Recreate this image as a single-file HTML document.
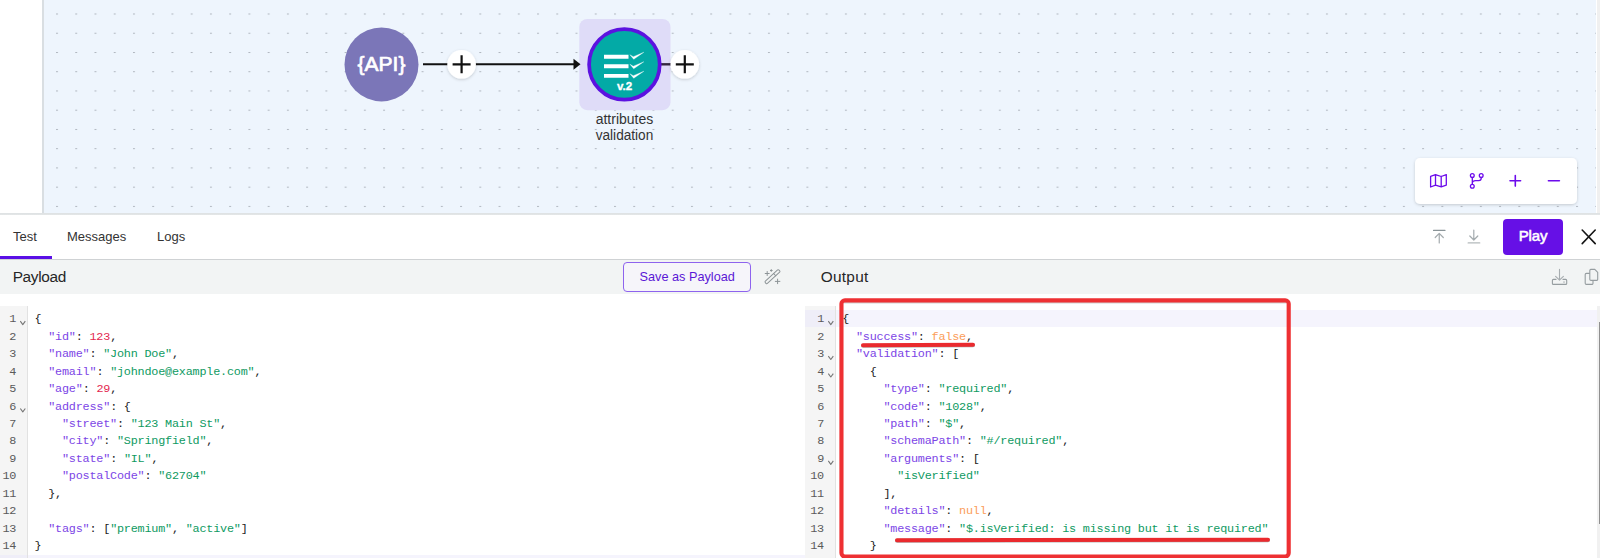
<!DOCTYPE html>
<html lang="en">
<head>
<meta charset="utf-8">
<title>Flow test</title>
<style>
*{box-sizing:border-box;margin:0;padding:0}
html,body{width:1600px;height:558px;overflow:hidden;background:#fff;font-family:"Liberation Sans",sans-serif;color:#222}
.abs{position:absolute}
#canvas{left:42px;top:0;width:1554px;height:213px;background:#eef5fd;border-left:2px solid #d9dee2;overflow:hidden}
#divider{left:0;top:213px;width:1600px;height:2px;background:linear-gradient(#dde1e3,#e4e7e8);z-index:5}
#dots{left:0;top:0}
#tabs{left:0;top:214px;width:1600px;height:46px;background:#fff;border-bottom:1px solid #cfd2d4}
.tab{top:15px;font-size:13px;color:#333;line-height:16px}
#tabline{left:0;top:42px;width:52px;height:3px;background:#5a0fe6}
#play{left:1503px;top:4.600px;width:60px;height:36.400px;border-radius:4px;background:#6610e6;color:#fff;font-size:15px;-webkit-text-stroke:0.55px #fff;text-align:center;line-height:34.600px;letter-spacing:-0.2px}
#hdr{left:0;top:260px;width:1600px;height:34px;background:#f2f4f4}
.htitle{top:7.700px;font-size:15.4px;color:#262626;line-height:18px}
#savebtn{left:623.200px;top:2.200px;width:128px;height:29.500px;border:1px solid #8e63ee;border-radius:4px;background:#f6f5fa;color:#5b17d6;font-size:12.7px;text-align:center;line-height:29px}
.gutter{top:306px;height:252px;background:#f5f5f5;border-right:1px solid #e2e2e2}
.code{font-family:"Liberation Mono",monospace;font-size:11.8px;letter-spacing:-0.206px;line-height:17.46px;white-space:pre;color:#222}
.ln{color:#5a5a5a;text-align:right}
.k{color:#7c45e6}.s{color:#0e9a62}.n{color:#e3284f}.b{color:#fb9d5a}.p{color:#222}
.fold{font-family:"Liberation Sans",sans-serif;font-size:9px;color:#777}
.active{background:#f5f4fd;height:17.5px}
</style>
</head>
<body>
<div id="canvas" class="abs">
<svg id="dots" class="abs" width="1560" height="214">
<defs><pattern id="dp" x="12" y="13.5" width="19.241" height="19.241" patternUnits="userSpaceOnUse"><rect x="0" y="0" width="2" height="1" fill="#b0b6bf"/></pattern></defs>
<rect width="1560" height="214" fill="url(#dp)"/>
</svg>
</div>
<div id="divider" class="abs"></div>
<div class="abs" style="left:1597px;top:0;width:3px;height:213px;background:#f0f0f0"></div>
<!-- flow nodes -->
<svg class="abs" style="left:0;top:0" width="1600" height="214">
<defs><filter id="sh" x="-30%" y="-30%" width="160%" height="160%"><feDropShadow dx="0" dy="1" stdDeviation="1.5" flood-color="#000" flood-opacity="0.18"/></filter></defs>
<rect x="579.300" y="19" width="91.200" height="91.200" rx="8" fill="#dfdcf8"/>
<circle cx="381.500" cy="64.400" r="37" fill="#7b76b8"/>
<text x="381.500" y="71.300" font-family="Liberation Sans, sans-serif" font-size="21" fill="#fff" stroke="#fff" stroke-width="0.7" text-anchor="middle">{API}</text>
<line x1="423" y1="64.300" x2="574" y2="64.300" stroke="#111" stroke-width="1.900"/>
<polygon points="573.500,58.800 580.500,64.300 573.500,69.800" fill="#111"/>
<line x1="660" y1="64.300" x2="674" y2="64.300" stroke="#33263f" stroke-width="2.400"/>
<circle cx="461.600" cy="64.300" r="14.300" fill="#fff" filter="url(#sh)"/>
<path d="M452.600 64.300H470.600M461.600 55.300V73.300" stroke="#111" stroke-width="2.200" fill="none"/>
<circle cx="684.800" cy="64.300" r="14.300" fill="#fff" filter="url(#sh)"/>
<path d="M675.800 64.300H693.800M684.800 55.300V73.300" stroke="#111" stroke-width="2.200" fill="none"/>
<circle cx="624.400" cy="64.400" r="35.300" fill="#03aaa6" stroke="#5c12e0" stroke-width="3.700"/>
<g stroke="#fff" stroke-width="3.900" fill="none">
<path d="M604 56.800H628.500M604 66.300H628.500M604 75.900H628.500"/>
</g>
<g fill="#fff" stroke="#fff" stroke-width="0.3" stroke-linejoin="round">
<path d="M629.900 54.7L633.300 56.7L643.900 52.2L633.700 59.3Z"/>
<path d="M629.900 64.2L633.300 66.2L643.900 61.7L633.700 68.8Z"/>
<path d="M629.900 73.7L633.300 75.7L643.900 71.2L633.700 78.3Z"/>
</g>
<text x="624.500" y="90" font-family="Liberation Sans, sans-serif" font-size="10.500" font-weight="bold" fill="#fff" stroke="#fff" stroke-width="0.3" text-anchor="middle" textLength="15.200" lengthAdjust="spacingAndGlyphs">v.2</text>
<text x="624.500" y="123.500" font-family="Liberation Sans, sans-serif" font-size="14" fill="#333" text-anchor="middle" textLength="57.600" lengthAdjust="spacingAndGlyphs">attributes</text>
<text x="624.500" y="139.500" font-family="Liberation Sans, sans-serif" font-size="14" fill="#333" text-anchor="middle" textLength="57.600" lengthAdjust="spacingAndGlyphs">validation</text>
<!-- toolbar -->
<rect x="1415" y="158" width="162" height="46" rx="5" fill="#fff" filter="url(#sh)"/>
<g stroke="#6c0beb" stroke-width="1.300" fill="none" stroke-linejoin="round" stroke-linecap="round">
<path d="M1430.600 176.300L1435.500 174.600L1441.200 176.500L1446.300 174.600V185.100L1441.200 186.900L1435.500 185.100L1430.600 187zM1435.500 174.600V185.100M1441.200 176.500V186.900"/>
<circle cx="1472.300" cy="175.600" r="1.900"/><circle cx="1481.200" cy="175.600" r="1.900"/><circle cx="1472.300" cy="186.200" r="1.900"/>
<path d="M1472.300 177.500V184.300M1481.200 177.500v0.800c0 1.400-1 2.300-2.400 2.300h-3.200c-1.800 0-3.300 1.200-3.300 3"/>
</g>
<g stroke="#6c0beb" stroke-width="1.600" fill="none" stroke-linecap="round">
<path d="M1510 180.800h10.600M1515.300 175.500v10.600"/>
<path d="M1548.400 180.800h11"/>
</g>
</svg>

<div id="tabs" class="abs">
<div class="tab abs" style="left:13px">Test</div>
<div class="tab abs" style="left:67px">Messages</div>
<div class="tab abs" style="left:157px">Logs</div>
<div id="tabline" class="abs"></div>

<div id="play" class="abs">Play</div>

</div>

<div id="hdr" class="abs">
<div class="htitle abs" style="left:12.700px;letter-spacing:-0.33px">Payload</div>
<div id="savebtn" class="abs">Save as Payload</div>

<div class="htitle abs" style="left:820.700px;letter-spacing:0.27px">Output</div>

</div>

<svg class="abs" id="icons" style="left:0;top:0;z-index:6" width="1600" height="558">
<g fill="none" stroke-linecap="round" stroke-linejoin="round">
<path d="M1433.500 230.400h11.500" stroke="#8a9498" stroke-width="1.100"/>
<path d="M1439.250 243V233.500M1435.200 237.500l4.050-4.100 4.050 4.100" stroke="#a4abae" stroke-width="1.200"/>
<path d="M1473.800 230V239.800M1469.800 236l4 4 4-4" stroke="#a4abae" stroke-width="1.200"/>
<path d="M1468.200 242.900h11.500" stroke="#b4babc" stroke-width="1.400"/>
<path d="M1582.200 230l13 13.600M1595.200 230l-13 13.600" stroke="#151515" stroke-width="1.600"/>
<path d="M844.500 302.800H1285.700" stroke="#5a5a5a" stroke-opacity="0.55" stroke-width="0.8"/>
<rect x="841.450" y="300.350" width="447.250" height="256.200" rx="3.500" fill="none" stroke="#ee3033" stroke-width="4.150"/>
<path d="M20.3 321.2l2.5 3.400 2.500-3.400 M20.3 408.5l2.5 3.400 2.500-3.400 M828.3 321.2l2.5 3.400 2.500-3.400 M828.3 356.1l2.5 3.400 2.500-3.400 M828.3 373.6l2.5 3.400 2.500-3.400 M828.3 460.9l2.5 3.400 2.500-3.400" stroke="#777" stroke-width="1.1" stroke-linecap="butt"/>
<g stroke="#8d9497" stroke-width="1" fill="none">
<g transform="translate(772.500 276.700) rotate(-42.500)"><rect x="-9.300" y="-1.500" width="18.600" height="3" rx="1"/><path d="M3 -1.500v3"/></g>
<path d="M765.200 273.500h4M767.200 271.500v4M775.300 281.400h4.600M777.600 279.100v4.600M770.400 270.500h1.800M771.300 269.600v1.800"/>
</g>
<g stroke="#969da0" stroke-width="1.100">
<path d="M1559.500 269.400V280M1555.600 276.300l3.900 3.900 3.900-3.900" stroke="#a7adb0"/>
<path d="M1556 279.400h-2.600a1 1 0 0 0-1 1v3a1 1 0 0 0 1 1h12.300a1 1 0 0 0 1-1v-3a1 1 0 0 0-1-1h-2.700"/>
<path d="M1564 281.700v0.600"/>
<path d="M1589.400 273.400h-3a1.200 1.200 0 0 0-1.200 1.200v8.600a1.200 1.200 0 0 0 1.200 1.200h5.400a1.200 1.200 0 0 0 1.200-1.200v-2.600"/>
<path d="M1591 269.400h3.800l2.900 2.900v6.900a1.200 1.200 0 0 1-1.200 1.200h-5.500a1.200 1.200 0 0 1-1.200-1.200v-8.600a1.200 1.200 0 0 1 1.200-1.200z"/>
</g>
</g>
</svg>
<!-- left editor -->
<div class="abs active" style="left:0;top:554.600px;width:805px"></div>
<div class="gutter abs" style="left:0;width:28px"></div>
<div class="abs active" style="left:0;top:554.600px;width:27px;background:#efeef8"></div>
<div class="code ln abs" style="left:0;top:311.300px;width:16.200px">1
2
3
4
5
6
7
8
9
10
11
12
13
14</div>
<div class="code abs" style="left:34.500px;top:311.300px"><span class="p">{</span>
  <span class="k">"id"</span>: <span class="n">123</span>,
  <span class="k">"name"</span>: <span class="s">"John Doe"</span>,
  <span class="k">"email"</span>: <span class="s">"johndoe@example.com"</span>,
  <span class="k">"age"</span>: <span class="n">29</span>,
  <span class="k">"address"</span>: {
    <span class="k">"street"</span>: <span class="s">"123 Main St"</span>,
    <span class="k">"city"</span>: <span class="s">"Springfield"</span>,
    <span class="k">"state"</span>: <span class="s">"IL"</span>,
    <span class="k">"postalCode"</span>: <span class="s">"62704"</span>
  },

  <span class="k">"tags"</span>: [<span class="s">"premium"</span>, <span class="s">"active"</span>]
}</div>

<!-- right editor -->
<div class="abs active" style="left:805px;top:309.600px;width:795px"></div>
<div class="gutter abs" style="left:805px;width:31px"></div>
<div class="abs active" style="left:805px;top:309.600px;width:30px;background:#efeef8"></div>
<div class="code ln abs" style="left:805px;top:311.300px;width:19px">1
2
3
4
5
6
7
8
9
10
11
12
13
14</div>
<div class="code abs" style="left:842.200px;top:311.300px"><span class="p">{</span>
  <span class="k">"success"</span>: <span class="b">false</span>,
  <span class="k">"validation"</span>: [
    {
      <span class="k">"type"</span>: <span class="s">"required"</span>,
      <span class="k">"code"</span>: <span class="s">"1028"</span>,
      <span class="k">"path"</span>: <span class="s">"$"</span>,
      <span class="k">"schemaPath"</span>: <span class="s">"#/required"</span>,
      <span class="k">"arguments"</span>: [
        <span class="s">"isVerified"</span>
      ],
      <span class="k">"details"</span>: <span class="b">null</span>,
      <span class="k">"message"</span>: <span class="s">"$.isVerified: is missing but it is required"</span>
    }</div>

<div class="abs" style="left:861px;top:343.200px;width:114px;height:3.800px;border-radius:2px;background:#ea2a2e;box-shadow:0 0.5px 0.6px rgba(70,70,70,.45);transform:rotate(-0.3deg)"></div>
<div class="abs" style="left:895px;top:538.100px;width:375px;height:3.800px;border-radius:2px;background:#ea2a2e;box-shadow:0 0.5px 0.6px rgba(70,70,70,.45);transform:rotate(-0.07deg)"></div>
<div class="abs" style="left:1597px;top:306px;width:3px;height:252px;background:#f1f1f1"></div>
<div class="abs" style="left:1598.700px;top:322px;width:1.300px;height:202px;background:#909090"></div>
</body>
</html>
